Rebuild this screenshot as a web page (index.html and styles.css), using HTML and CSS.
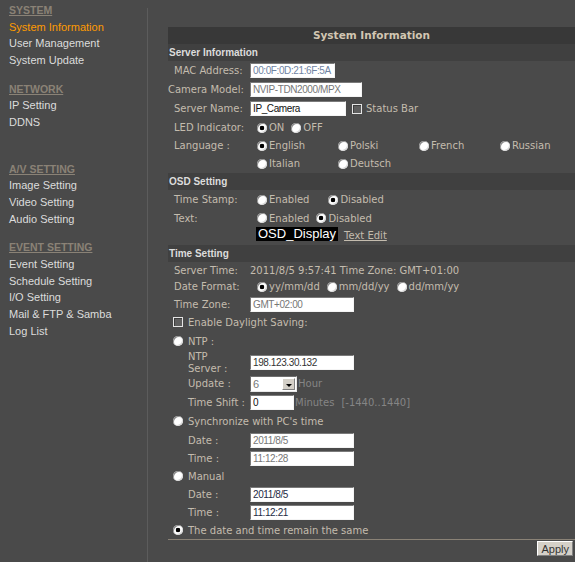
FILE: index.html
```html
<!DOCTYPE html>
<html lang="en">
<head>
  <meta charset="UTF-8">
  <title>System Information</title>
  <link rel="stylesheet" href="styles.css">
</head>
<body>

<div class="layout">
  <div class="sidebar">
    <div class="group">
      <div class="menu-title">SYSTEM</div>
      <a class="menu-item active" href="#">System Information</a>
      <a class="menu-item" href="#">User Management</a>
      <a class="menu-item" href="#">System Update</a>
    </div>
    <div class="group">
      <div class="menu-title">NETWORK</div>
      <a class="menu-item" href="#">IP Setting</a>
      <a class="menu-item" href="#">DDNS</a>
    </div>
    <div class="group far">
      <div class="menu-title">A/V SETTING</div>
      <a class="menu-item" href="#">Image Setting</a>
      <a class="menu-item" href="#">Video Setting</a>
      <a class="menu-item" href="#">Audio Setting</a>
    </div>
    <div class="group">
      <div class="menu-title">EVENT SETTING</div>
      <a class="menu-item" href="#">Event Setting</a>
      <a class="menu-item" href="#">Schedule Setting</a>
      <a class="menu-item" href="#">I/O Setting</a>
      <a class="menu-item" href="#">Mail &amp; FTP &amp; Samba</a>
      <a class="menu-item" href="#">Log List</a>
    </div>
  </div>

  <div class="divider"></div>

  <div class="main">
    <div class="title">System Information</div>

    <!-- server info -->
    <div class="section">Server Information</div>
    <div class="row h19">
      <span class="label">MAC Address:</span>
      <input class="field mac" type="text" value="00:0F:0D:21:6F:5A" readonly>
    </div>
    <div class="row h19">
      <span class="label flush">Camera Model:</span>
      <input class="field ro w-model" type="text" value="NVIP-TDN2000/MPX" readonly>
    </div>
    <div class="row h19">
      <span class="label">Server Name:</span>
      <input class="field w-name" type="text" value="IP_Camera">
      <label class="check status"><input type="checkbox">Status Bar</label>
    </div>
    <div class="row h19">
      <span class="label">LED Indicator:</span>
      <label class="opt"><input type="radio" name="led" checked>ON</label>
      <label class="opt"><input type="radio" name="led">OFF</label>
    </div>
    <div class="row lang">
      <span class="label">Language :</span>
      <div class="lang-grid">
        <label class="opt"><input type="radio" name="lang" checked>English</label>
        <label class="opt"><input type="radio" name="lang">Polski</label>
        <label class="opt"><input type="radio" name="lang">French</label>
        <label class="opt"><input type="radio" name="lang">Russian</label>
        <label class="opt"><input type="radio" name="lang">Italian</label>
        <label class="opt"><input type="radio" name="lang">Deutsch</label>
      </div>
    </div>

    <!-- osd -->
    <div class="section">OSD Setting</div>
    <div class="row h19">
      <span class="label">Time Stamp:</span>
      <label class="opt"><input type="radio" name="stamp">Enabled</label>
      <label class="opt far"><input type="radio" name="stamp" checked>Disabled</label>
    </div>
    <div class="row">
      <span class="label">Text:</span>
      <label class="opt"><input type="radio" name="osdtext">Enabled</label>
      <label class="opt"><input type="radio" name="osdtext" checked>Disabled</label>
    </div>
    <div class="row osd">
      <span class="label"></span>
      <span class="osd-box">OSD_Display</span>
      <a class="text-edit" href="#">Text Edit</a>
    </div>

    <!-- time -->
    <div class="section">Time Setting</div>
    <div class="row h16">
      <span class="label">Server Time:</span>
      <span>2011/8/5 9:57:41 Time Zone: GMT+01:00</span>
    </div>
    <div class="row h17">
      <span class="label">Date Format:</span>
      <label class="opt"><input type="radio" name="fmt" checked>yy/mm/dd</label>
      <label class="opt"><input type="radio" name="fmt">mm/dd/yy</label>
      <label class="opt"><input type="radio" name="fmt">dd/mm/yy</label>
    </div>
    <div class="row">
      <span class="label">Time Zone:</span>
      <input class="field ro w-long" type="text" value="GMT+02:00" readonly>
    </div>
    <div class="row">
      <label class="check lead"><input type="checkbox">Enable Daylight Saving:</label>
    </div>
    <div class="row h20">
      <label class="opt lead"><input type="radio" name="mode">NTP :</label>
    </div>
    <div class="row h23">
      <span class="label sub two-line">NTP<br>Server :</span>
      <input class="field dark w-long" type="text" value="198.123.30.132">
    </div>
    <div class="row h19">
      <span class="label sub">Update :</span>
      <span class="select"><span class="select-val">6</span><span class="select-btn"></span></span>
      <span class="hint">Hour</span>
    </div>
    <div class="row">
      <span class="label sub">Time Shift :</span>
      <input class="field w-short" type="text" value="0">
      <span class="hint">Minutes</span>
      <span class="hint range">[-1440..1440]</span>
    </div>
    <div class="row h20">
      <label class="opt lead"><input type="radio" name="mode">Synchronize with PC's time</label>
    </div>
    <div class="row">
      <span class="label sub">Date :</span>
      <input class="field ro w-long" type="text" value="2011/8/5" readonly>
    </div>
    <div class="row">
      <span class="label sub">Time :</span>
      <input class="field ro w-long" type="text" value="11:12:28" readonly>
    </div>
    <div class="row">
      <label class="opt lead"><input type="radio" name="mode">Manual</label>
    </div>
    <div class="row">
      <span class="label sub">Date :</span>
      <input class="field navy w-long" type="text" value="2011/8/5">
    </div>
    <div class="row">
      <span class="label sub">Time :</span>
      <input class="field navy w-long" type="text" value="11:12:21">
    </div>
    <div class="row">
      <label class="opt lead"><input type="radio" name="mode" checked>The date and time remain the same</label>
    </div>

    <div class="footer">
      <button class="apply">Apply</button>
    </div>
  </div>
</div>

</body>
</html>
```

FILE: styles.css
```css
body {
  margin: 0;
  background: #4a4a4a;
  font-family: "DejaVu Sans", Verdana, sans-serif;
  font-size: 10px;
  color: #c4bcae;
}
.layout {
  display: flex;
  min-height: 562px;
}

/* left menu */
.sidebar {
  width: 147px;
  flex: none;
  box-sizing: border-box;
  padding: 2px 0 0 9px;
  font-family: "Liberation Sans", Arial, sans-serif;
  font-size: 11px;
  line-height: 16.67px;
}
.group + .group {
  margin-top: 12px;
}
.group.far {
  margin-top: 30px;
}
.menu-title {
  font-weight: bold;
  font-size: 10.5px;
  color: #8a8276;
  text-decoration: underline;
}
.menu-item {
  display: block;
  color: #dcdcdc;
  text-decoration: none;
}
.menu-item.active {
  color: #ff9a00;
}
.divider {
  width: 1px;
  flex: none;
  margin-top: 8px;
  background: #5c5c5c;
}

/* content */
.main {
  flex: 1;
  margin: 27px 0 0 20px;
}
.title {
  height: 17px;
  line-height: 17px;
  background: #383838;
  text-align: center;
  font-weight: bold;
  font-size: 10.5px;
  color: #d2c6b2;
}
.section {
  height: 17px;
  line-height: 17px;
  background: #404040;
  padding-left: 1px;
  font-family: "Liberation Sans", Arial, sans-serif;
  font-weight: bold;
  font-size: 10px;
  color: #dcdcdc;
}
.row {
  display: flex;
  align-items: center;
  height: 18px;
  white-space: nowrap;
}
.row.h16 { height: 16px; }
.row.h17 { height: 17px; }
.row.h19 { height: 19px; }
.row.h20 { height: 20px; }
.row.h23 { height: 23px; }

.label {
  width: 82px;
  flex: none;
  box-sizing: border-box;
  padding-left: 6px;
}
.label.flush {
  padding-left: 0;
}
.label.sub {
  padding-left: 20px;
}
.label.two-line {
  line-height: 12px;
}

/* text boxes */
.field {
  box-sizing: border-box;
  height: 15px;
  margin: 0;
  padding: 0 2px;
  border: 1px solid;
  border-color: #7a7a7a #f4f4f4 #f4f4f4 #7a7a7a;
  background: #fff;
  font-family: "Liberation Sans", Arial, sans-serif;
  font-size: 10px;
  letter-spacing: -0.4px;
  color: #111;
  outline: none;
}
.field.mac { width: 85px; color: #6f84a3; }
.field.ro { color: #777; }
.field.dark { color: #333; }
.field.navy { color: #1e2b45; }
.w-model { width: 112px; }
.w-name { width: 96px; }
.w-long { width: 104px; }
.w-short { width: 44px; }

/* radios + checkboxes */
.opt, .check {
  display: inline-flex;
  align-items: center;
}
.opt {
  margin-left: 7px;
  gap: 2px;
}
.opt.far {
  margin-left: 19px;
}
.opt.lead, .check.lead {
  margin-left: 5px;
  gap: 5px;
}
.check.status {
  margin-left: 6px;
  gap: 4px;
}
input[type=radio] {
  appearance: none;
  margin: 0;
  width: 10px;
  height: 10px;
  border-radius: 50%;
  background: #fff;
  box-shadow: inset 1px 1px 0 #8a8a8a, inset -1px -1px 0 #d8d8d8;
}
input[type=radio]:checked {
  background: radial-gradient(circle, #000 0 2px, #fff 2.6px);
}
input[type=checkbox] {
  appearance: none;
  margin: 0;
  width: 10px;
  height: 10px;
  box-sizing: border-box;
  border: 1px solid #e4e4e4;
  background: #5e5e5e;
  box-shadow: inset 1px 1px 0 #3c3c3c;
}

.row.lang {
  height: 36px;
  align-items: flex-start;
  line-height: 18px;
}
.lang-grid {
  display: grid;
  grid-template-columns: repeat(4, 81px);
  grid-auto-rows: 18px;
}

/* osd text */
.row.osd {
  align-items: flex-start;
}
.osd-box {
  margin-left: 6px;
  padding: 0 2px;
  height: 14px;
  line-height: 14px;
  background: #000;
  color: #fff;
  font-family: "Liberation Sans", Arial, sans-serif;
  font-size: 13px;
}
.text-edit {
  margin: 3px 0 0 6px;
  line-height: 12px;
  color: #c4bcae;
}

/* dropdown */
.select {
  display: flex;
  box-sizing: border-box;
  width: 47px;
  height: 16px;
  border: 1px solid;
  border-color: #6e6e6e #e8e8e8 #e8e8e8 #6e6e6e;
  background: #fff;
  font-family: "Liberation Sans", Arial, sans-serif;
  font-size: 11px;
  color: #777;
}
.select-val {
  flex: 1;
  padding-left: 2px;
  line-height: 14px;
}
.select-btn {
  position: relative;
  width: 13px;
  margin: 1px;
  box-sizing: border-box;
  border: 1px solid;
  border-color: #fff #808080 #808080 #fff;
  background: #d4d0c8;
}
.select-btn::after {
  content: "";
  position: absolute;
  left: 3px;
  top: 5px;
  border-left: 3px solid transparent;
  border-right: 3px solid transparent;
  border-top: 3px solid #000;
}
.hint {
  margin-left: 1px;
  color: #858585;
}
.hint.range {
  margin-left: 7px;
}

/* bottom */
.footer {
  display: flex;
  justify-content: flex-end;
  border-top: 1px solid #8a8276;
}
.apply {
  margin: 1px 2px 0 0;
  padding: 0 3px;
  height: 15px;
  border: 1px solid;
  border-color: #fff #808080 #808080 #fff;
  background: #d4d0c8;
  font-family: "Liberation Sans", Arial, sans-serif;
  font-size: 11px;
  line-height: 12px;
  color: #333;
}
```
